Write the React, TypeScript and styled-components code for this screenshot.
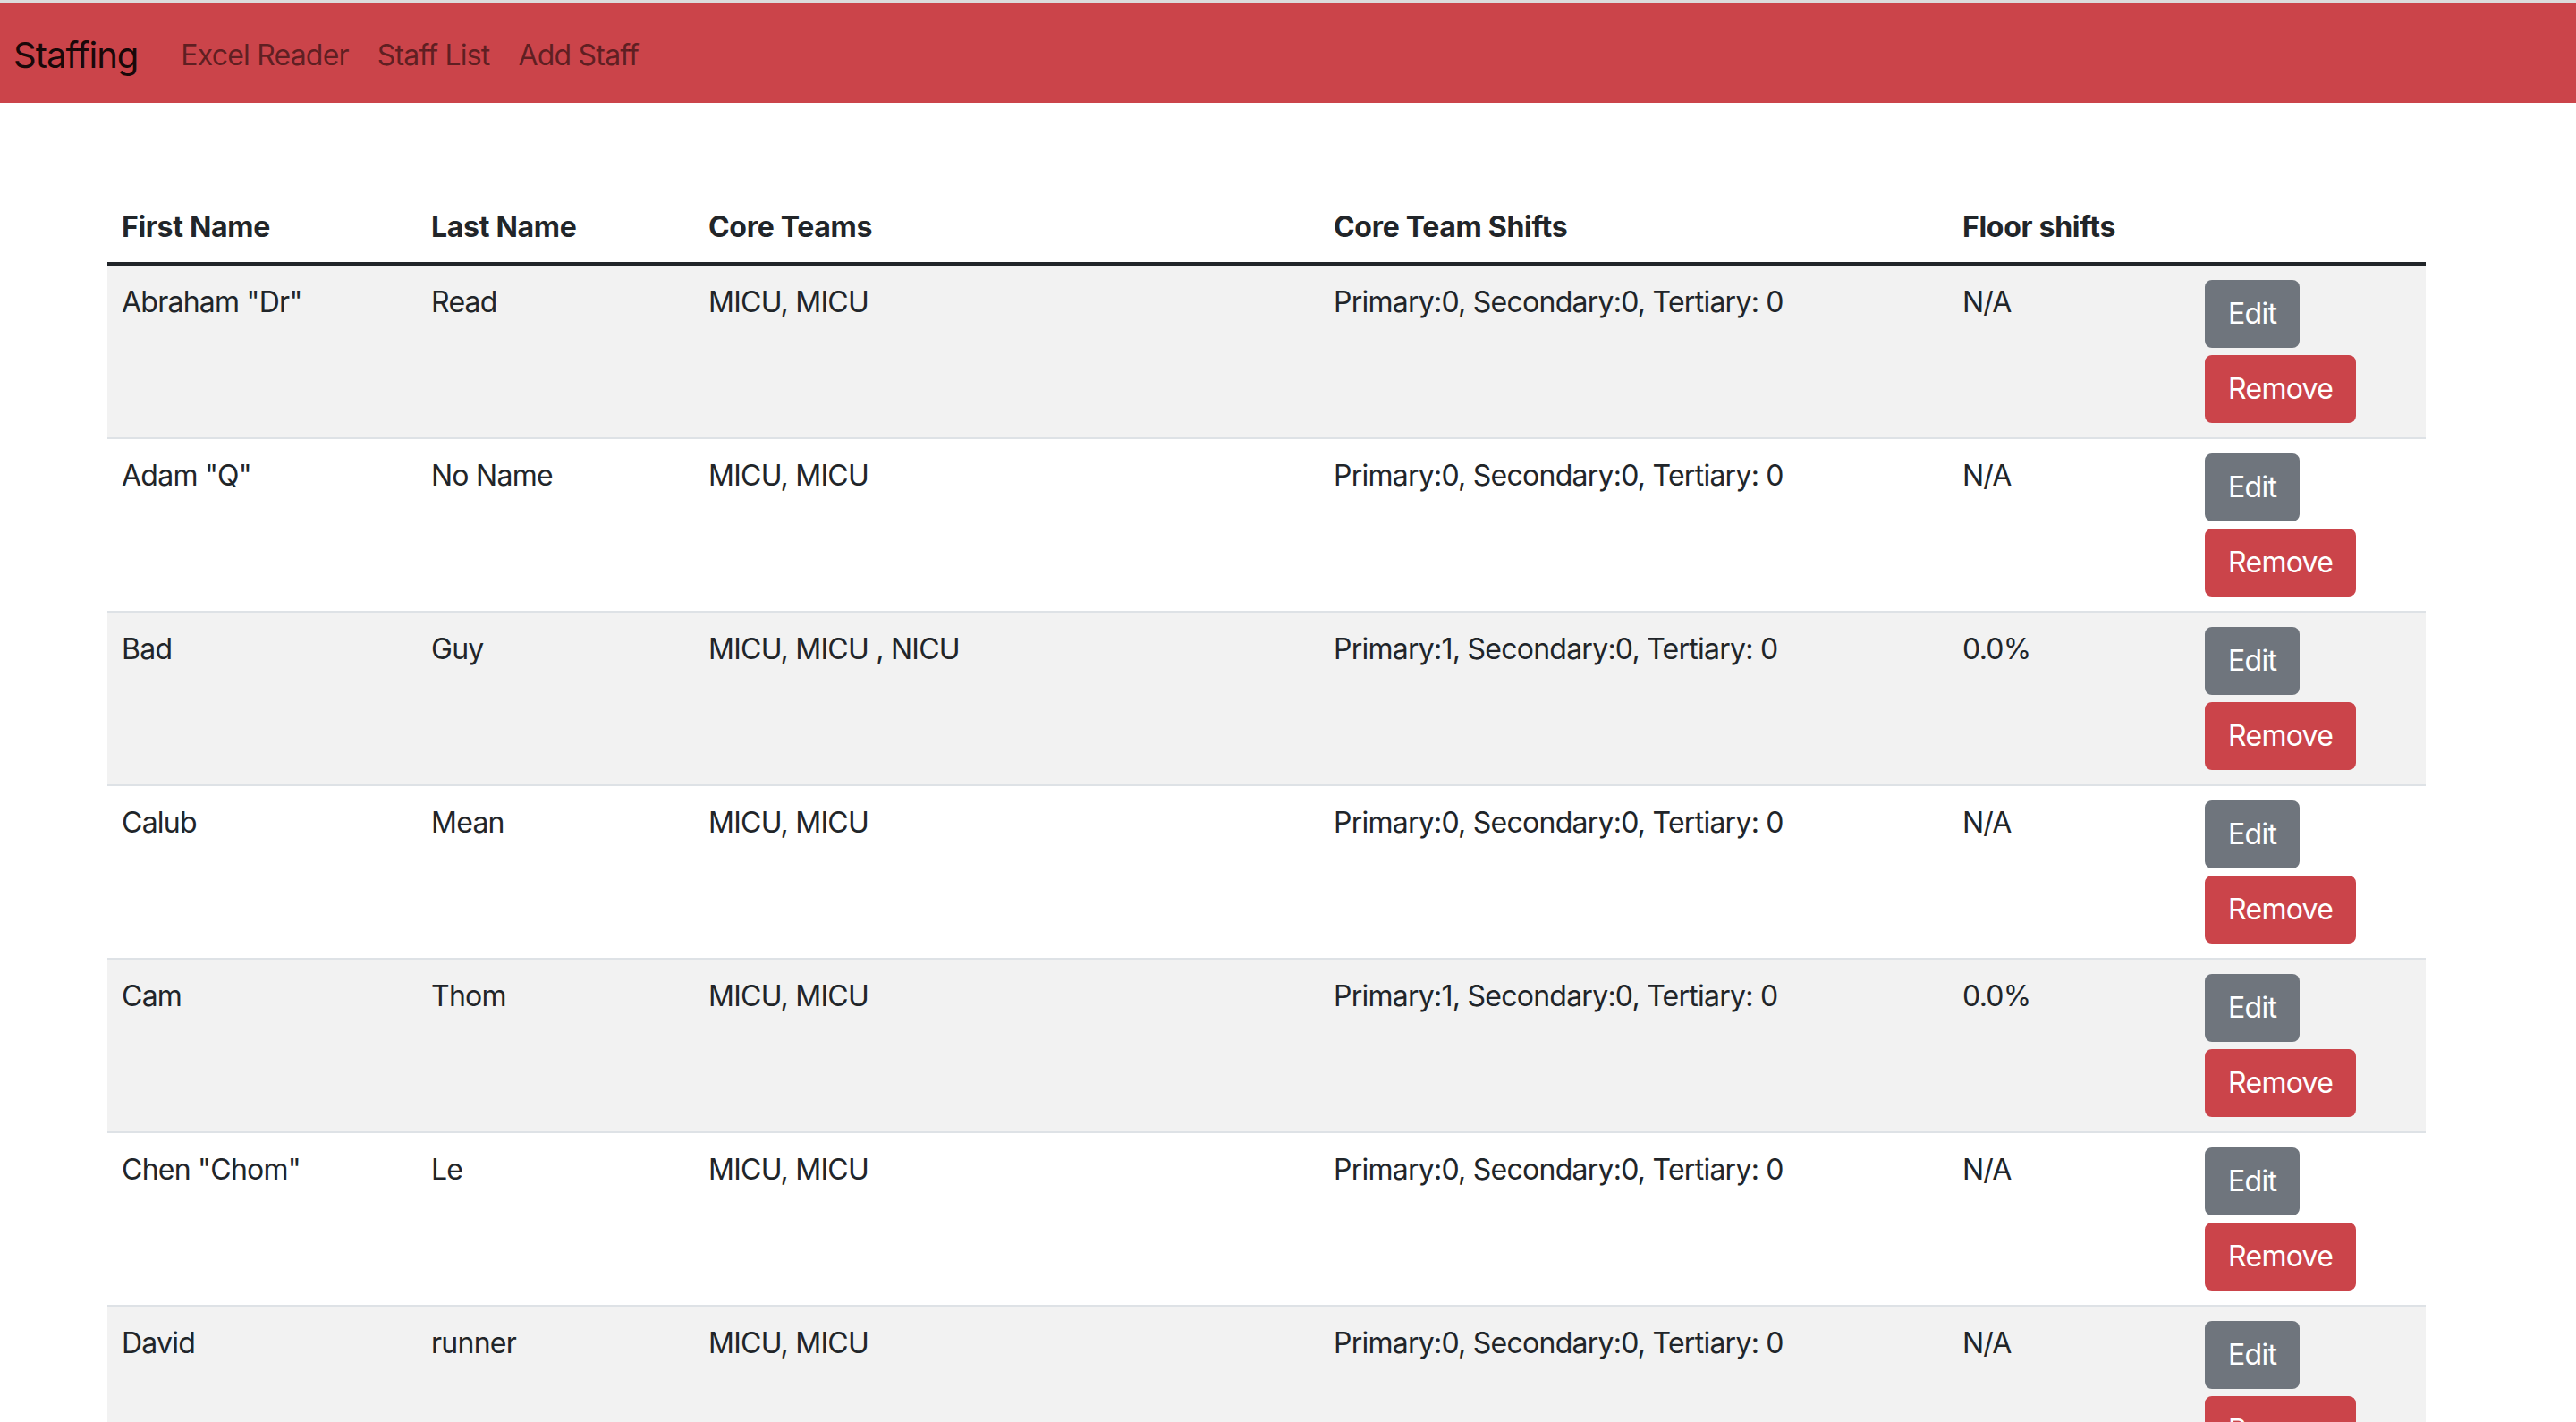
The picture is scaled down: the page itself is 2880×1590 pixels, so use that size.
import React from "react";
import styled, { createGlobalStyle } from "styled-components";

const GlobalStyle = createGlobalStyle`
  html, body {
    margin: 0;
    padding: 0;
    background: #ffffff;
  }
  body {
    font-family: Inter, "Noto Sans", "Liberation Sans", sans-serif;
    font-size: 32px;
    line-height: 1.5;
    color: #212529;
  }
  * { box-sizing: border-box; }
`;

const Navbar = styled.nav`
  display: flex;
  align-items: center;
  height: 115px;
  border-top: 3px solid #dcdcdc;
  background: #cb444a;
  padding: 5px 0 0 15px;
`;

const Brand = styled.a`
  font-size: 40px;
  line-height: 60px;
  color: rgba(0, 0, 0, 0.9);
  text-decoration: none;
  margin-right: 32px;
  letter-spacing: -1px;
`;

const NavLinks = styled.div`
  display: flex;
  align-items: center;
`;

const NavLink = styled.a`
  font-size: 32px;
  line-height: 48px;
  padding: 0 16px;
  color: rgba(0, 0, 0, 0.55);
  text-decoration: none;
  letter-spacing: -0.8px;
`;

const Main = styled.main`
  padding: 98px 168px 0 120px;
`;

const Table = styled.table`
  width: 2592px;
  table-layout: fixed;
  border-collapse: collapse;
`;

const HeadCell = styled.th`
  text-align: left;
  font-weight: 700;
  padding: 17px 16px 15px;
  line-height: 48px;
  border-bottom: 4px solid #212529;
  vertical-align: bottom;
  letter-spacing: -0.3px;
`;

const Row = styled.tr<{ $striped: boolean }>`
  background: ${(p) => (p.$striped ? "#f2f2f2" : "#ffffff")};
  border-bottom: 2px solid #dee2e6;
`;

const Cell = styled.td`
  padding: 17px 16px 15px;
  line-height: 48px;
  vertical-align: top;
  letter-spacing: -0.75px;
`;

const ActionCell = styled.td`
  padding: 16px;
  vertical-align: top;
`;

const Actions = styled.div`
  display: flex;
  flex-direction: column;
  align-items: flex-start;
  gap: 8px;
`;

const Button = styled.button<{ $variant: "secondary" | "danger" }>`
  font-family: inherit;
  font-size: 32px;
  line-height: 48px;
  padding: 12px 24px;
  border: 2px solid ${(p) => (p.$variant === "danger" ? "#cb444a" : "#6f757d")};
  background: ${(p) => (p.$variant === "danger" ? "#cb444a" : "#6f757d")};
  color: #ffffff;
  border-radius: 8px;
  cursor: pointer;
  letter-spacing: -0.7px;
`;

type Staff = {
  first: string;
  last: string;
  teams: string;
  shifts: string;
  floor: string;
};

const staff: Staff[] = [
  { first: 'Abraham "Dr"', last: "Read", teams: "MICU, MICU", shifts: "Primary:0, Secondary:0, Tertiary: 0", floor: "N/A" },
  { first: 'Adam "Q"', last: "No Name", teams: "MICU, MICU", shifts: "Primary:0, Secondary:0, Tertiary: 0", floor: "N/A" },
  { first: "Bad", last: "Guy", teams: "MICU, MICU , NICU", shifts: "Primary:1, Secondary:0, Tertiary: 0", floor: "0.0%" },
  { first: "Calub", last: "Mean", teams: "MICU, MICU", shifts: "Primary:0, Secondary:0, Tertiary: 0", floor: "N/A" },
  { first: "Cam", last: "Thom", teams: "MICU, MICU", shifts: "Primary:1, Secondary:0, Tertiary: 0", floor: "0.0%" },
  { first: 'Chen "Chom"', last: "Le", teams: "MICU, MICU", shifts: "Primary:0, Secondary:0, Tertiary: 0", floor: "N/A" },
  { first: "David", last: "runner", teams: "MICU, MICU", shifts: "Primary:0, Secondary:0, Tertiary: 0", floor: "N/A" },
];

const widths = [346, 310, 699, 703, 271, 263];

export default function App() {
  return (
    <>
      <GlobalStyle />
      <Navbar>
        <Brand href="#">Staffing</Brand>
        <NavLinks>
          <NavLink href="#">Excel Reader</NavLink>
          <NavLink href="#">Staff List</NavLink>
          <NavLink href="#">Add Staff</NavLink>
        </NavLinks>
      </Navbar>
      <Main>
        <Table>
          <colgroup>
            {widths.map((w, i) => (
              <col key={i} style={{ width: w }} />
            ))}
          </colgroup>
          <thead>
            <tr>
              <HeadCell>First Name</HeadCell>
              <HeadCell>Last Name</HeadCell>
              <HeadCell>Core Teams</HeadCell>
              <HeadCell>Core Team Shifts</HeadCell>
              <HeadCell>Floor shifts</HeadCell>
              <HeadCell></HeadCell>
            </tr>
          </thead>
          <tbody>
            {staff.map((s, i) => (
              <Row key={i} $striped={i % 2 === 0}>
                <Cell>{s.first}</Cell>
                <Cell>{s.last}</Cell>
                <Cell>{s.teams}</Cell>
                <Cell>{s.shifts}</Cell>
                <Cell>{s.floor}</Cell>
                <ActionCell>
                  <Actions>
                    <Button $variant="secondary">Edit</Button>
                    <Button $variant="danger">Remove</Button>
                  </Actions>
                </ActionCell>
              </Row>
            ))}
          </tbody>
        </Table>
      </Main>
    </>
  );
}
